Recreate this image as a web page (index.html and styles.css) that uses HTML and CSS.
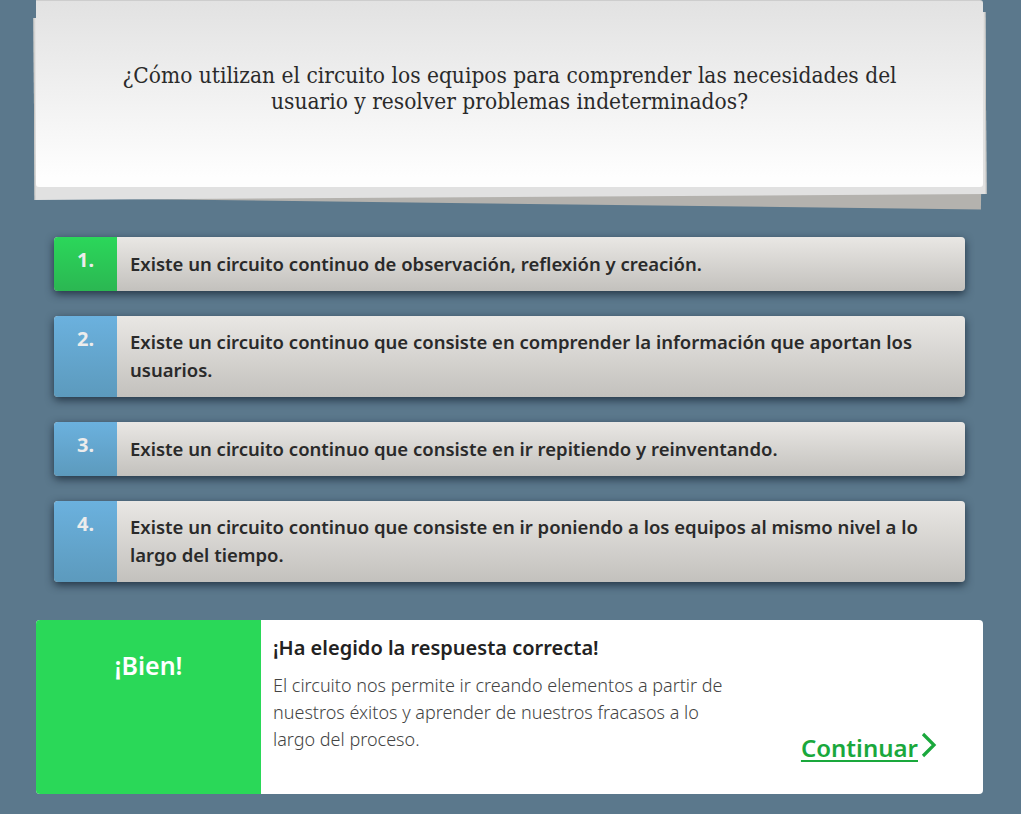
FILE: index.html
```html
<!DOCTYPE html>
<html lang="es">
<head>
<meta charset="utf-8">
<title>Pregunta</title>
<link rel="stylesheet" href="styles.css">
</head>
<body>
<main class="page">
  <section class="paper">
    <p class="question">¿Cómo utilizan el circuito los equipos para comprender las necesidades del usuario y resolver problemas indeterminados?</p>
  </section>

  <ol class="options">
    <li class="option correct"><span class="num">1.</span><span class="text">Existe un circuito continuo de observación, reflexión y creación.</span></li>
    <li class="option"><span class="num">2.</span><span class="text">Existe un circuito continuo que consiste en comprender la información que aportan los usuarios.</span></li>
    <li class="option"><span class="num">3.</span><span class="text">Existe un circuito continuo que consiste en ir repitiendo y reinventando.</span></li>
    <li class="option"><span class="num">4.</span><span class="text">Existe un circuito continuo que consiste en ir poniendo a los equipos al mismo nivel a lo largo del tiempo.</span></li>
  </ol>

  <section class="feedback">
    <div class="verdict">¡Bien!</div>
    <div class="fb-body">
      <h2 class="fb-title">¡Ha elegido la respuesta correcta!</h2>
      <p class="fb-text">El circuito nos permite ir creando elementos a partir de nuestros éxitos y aprender de nuestros fracasos a lo largo del proceso.</p>
      <a class="continue" href="#"><span class="continue-label">Continuar</span><svg class="chev" width="18" height="26" viewBox="0 0 18 26"><path d="M3 2 L14 13 L3 24" fill="none" stroke="currentColor" stroke-width="3.2"/></svg></a>
    </div>
  </section>
</main>
</body>
</html>
```

FILE: styles.css
```css
html, body {
  margin: 0;
  padding: 0;
}
body {
  background: #5b788c;
  font-family: "Noto Sans", "Open Sans", sans-serif;
  height: 814px;
  overflow: hidden;
}
.page {
  width: 947px;
  margin-left: 36px;
}
.paper {
  position: relative;
  height: 187px;
  display: flex;
  align-items: center;
  justify-content: center;
  padding-bottom: 12px;
  box-sizing: border-box;
  background: linear-gradient(#e2e2e2, #fefefe 95%);
  border-top: 1px solid #cdcdcd;
  border-radius: 0 3px 3px 3px;
}
.paper::before,
.paper::after {
  content: "";
  position: absolute;
}
.paper::after {
  z-index: -2;
  left: 6px;
  right: 2px;
  top: 20px;
  bottom: -11px;
  background: #b4b2ae;
  transform: rotate(0.7deg);
  transform-origin: left bottom;
}
.paper::before {
  z-index: -1;
  left: -2px;
  right: -3px;
  top: 14px;
  bottom: -10px;
  background: #e1e1e1;
  border-left: 1px solid #c9c7c3;
  border-right: 1px solid #c9c7c3;
  transform: rotate(-0.35deg);
}
.question {
  margin: 0;
  width: 800px;
  text-align: center;
  font-family: "DejaVu Serif", serif;
  font-stretch: condensed;
  font-size: 22.5px;
  line-height: 26px;
  color: #2a2a2a;
}
.options {
  list-style: none;
  margin: 50px 18px 0;
  padding: 0;
  display: flex;
  flex-direction: column;
  gap: 25px;
}
.option {
  display: flex;
  border-radius: 4px;
  overflow: hidden;
  background: linear-gradient(#e9e7e4, #c3c1bd);
  box-shadow: 0 3px 9px rgba(20, 35, 50, 0.8);
}
.num {
  flex: 0 0 63px;
  background: linear-gradient(#6bb1de, #5c9abd);
  color: #ececec;
  font-weight: 700;
  font-size: 20px;
  text-align: center;
  padding-top: 9px;
  box-sizing: border-box;
}
.correct .num {
  background: linear-gradient(#2bd75a, #2bb752);
}
.text {
  flex: 1;
  padding: 12.75px 30px 12.75px 13px;
  font-weight: 600;
  font-size: 18.5px;
  line-height: 28px;
  color: #2a2a2a;
}
.feedback {
  margin-top: 38px;
  display: flex;
  height: 174px;
  border-radius: 4px;
  overflow: hidden;
  background: #fff;
}
.verdict {
  flex: 0 0 225px;
  background: #2ad858;
  color: #fff;
  font-weight: 600;
  font-size: 25px;
  text-align: center;
  padding-top: 28px;
  box-sizing: border-box;
}
.fb-body {
  flex: 1;
  position: relative;
  padding: 14px 12px 0 12px;
}
.fb-title {
  margin: 0;
  font-size: 20px;
  font-weight: 600;
  line-height: 28px;
  color: #222;
}
.fb-text {
  margin: 10px 0 0;
  width: 466px;
  font-size: 18px;
  font-weight: 300;
  line-height: 27px;
  color: #444;
}
.continue {
  position: absolute;
  right: 45px;
  bottom: 30px;
  display: flex;
  align-items: center;
  color: #1aa83c;
  text-decoration: none;
  font-size: 24px;
  font-weight: 600;
}
.continue-label {
  text-decoration: underline;
  text-decoration-thickness: 2px;
  text-underline-offset: 3px;
}
.chev {
  margin-left: 2px;
  margin-top: -6px;
}
```
